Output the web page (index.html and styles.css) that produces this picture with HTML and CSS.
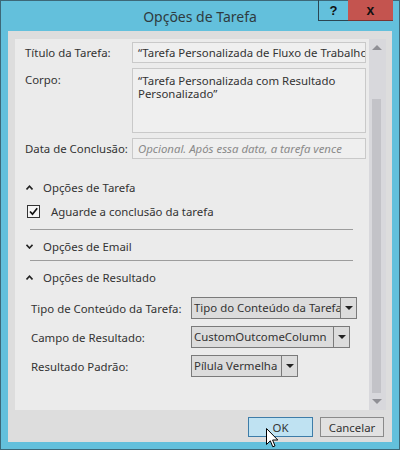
FILE: index.html
```html
<!DOCTYPE html>
<html lang="pt">
<head>
<meta charset="utf-8">
<link rel="stylesheet" href="styles.css">
</head>
<body>
<div class="window">
  <div class="titlebar">
    <div class="spacer"></div>
    <div class="title">Opções de Tarefa</div>
    <div class="caption-btns">
      <div class="cap help">?</div>
      <div class="cap close">x</div>
    </div>
  </div>
  <div class="client">
    <div class="panel">
      <div class="content">
        <div class="form">
          <div class="label">Título da Tarefa:</div>
          <div class="field">“Tarefa Personalizada de Fluxo de Trabalho”</div>
          <div class="label top">Corpo:</div>
          <div class="field area">“Tarefa Personalizada com Resultado Personalizado”</div>
          <div class="label">Data de Conclusão:</div>
          <div class="field placeholder">Opcional. Após essa data, a tarefa vence</div>
        </div>

        <div class="sec-head first">
          <svg class="chev" width="7" height="5" viewBox="0 0 7 5"><path d="M0.5 4.5 L3.5 1.2 L6.5 4.5" fill="none" stroke="#222" stroke-width="1.6"/></svg>
          <span>Opções de Tarefa</span>
        </div>
        <div class="check-row">
          <span class="checkbox"><svg width="11" height="11" viewBox="0 0 11 11"><path d="M2 5.5 L4.5 8.2 L9.2 2.2" fill="none" stroke="#111" stroke-width="1.7"/></svg></span>
          <span>Aguarde a conclusão da tarefa</span>
        </div>
        <div class="sep"></div>
        <div class="sec-head">
          <svg class="chev" width="7" height="5" viewBox="0 0 7 5"><path d="M0.5 0.8 L3.5 4 L6.5 0.8" fill="none" stroke="#222" stroke-width="1.6"/></svg>
          <span>Opções de Email</span>
        </div>
        <div class="sep second"></div>
        <div class="sec-head">
          <svg class="chev" width="7" height="5" viewBox="0 0 7 5"><path d="M0.5 4.5 L3.5 1.2 L6.5 4.5" fill="none" stroke="#222" stroke-width="1.6"/></svg>
          <span>Opções de Resultado</span>
        </div>

        <div class="drops">
          <div class="dlabel">Tipo de Conteúdo da Tarefa:</div>
          <div class="combo"><span class="ctext w1">Tipo do Conteúdo da Tarefa</span><span class="carrow"></span></div>
          <div class="dlabel">Campo de Resultado:</div>
          <div class="combo"><span class="ctext w2">CustomOutcomeColumn</span><span class="carrow"></span></div>
          <div class="dlabel">Resultado Padrão:</div>
          <div class="combo"><span class="ctext w3">Pílula Vermelha</span><span class="carrow"></span></div>
        </div>
      </div>
      <div class="scrollbar">
        <div class="sb-btn"><span class="tri up"></span></div>
        <div class="sb-track"><div class="sb-thumb"></div></div>
        <div class="sb-btn"><span class="tri down"></span></div>
      </div>
    </div>
    <div class="buttons">
      <div class="btn ok">OK</div>
      <div class="btn">Cancelar</div>
    </div>
  </div>
  <svg class="cursor" width="13" height="21" viewBox="0 0 13 21">
    <path d="M0.5 0.5 L0.5 16.5 L4.3 12.8 L6.8 18.8 L9 17.9 L6.6 12 L11.8 12 Z" fill="#fff" stroke="#000" stroke-width="1" stroke-linejoin="miter"/>
  </svg>
</div>
</body>
</html>
```

FILE: styles.css
```css
* { box-sizing: border-box; }
html, body { margin: 0; padding: 0; }
body {
  font-family: "Segoe UI", "Noto Sans", "Open Sans", sans-serif;
  font-size: 11.4px;
  color: #333;
}
.window {
  position: relative;
  width: 400px;
  height: 450px;
  background: #63c0dc;
  border: 1px solid #3d6878;
  display: flex;
  flex-direction: column;
}
.titlebar {
  height: 30px;
  display: grid;
  grid-template-columns: 1fr auto 1fr;
  align-items: center;
}
.title {
  font-size: 14px;
  color: #2f3b40;
  padding-top: 1px;
}
.caption-btns {
  justify-self: end;
  align-self: start;
  display: flex;
  margin-top: -1px;
  margin-right: 6px;
}
.cap {
  height: 21px;
  display: flex;
  align-items: center;
  justify-content: center;
  font-weight: bold;
  color: #111;
  font-size: 13px;
}
.help {
  width: 30px;
  border: 1px solid #2a4653;
  border-top: none;
  border-right: none;
  font-family: "Liberation Sans", sans-serif;
}
.close {
  width: 45px;
  background: #c4544f;
  border-bottom: 1px solid #7a3431;
  font-family: "Liberation Sans", sans-serif;
  font-size: 14px;
}
.client {
  flex: 1;
  margin: 0 7px 7px 7px;
  background: #dddddd;
  display: flex;
  flex-direction: column;
}
.panel {
  margin: 8px 6px 0 7px;
  height: 371px;
  background: #ebebeb;
  display: flex;
}
.content {
  flex: 1;
  padding: 3px 3px 0 10px;
  overflow: hidden;
}
.form {
  display: grid;
  grid-template-columns: 107px 234px;
  row-gap: 5px;
}
.label {
  display: flex;
  align-items: center;
  height: 21px;
  white-space: nowrap;
}
.label.top { align-items: flex-start; padding-top: 4px; }
.field {
  height: 21px;
  background: #efefef;
  border: 1px solid #c9c9c9;
  padding: 2px 5px 0 5px;
  white-space: nowrap;
  overflow: hidden;
  line-height: 16px;
}
.field.area {
  height: 65px;
  white-space: normal;
  line-height: 13px;
  padding-top: 5px;
}
.field.placeholder {
  font-style: italic;
  color: #8a8a8a;
}
.sec-head {
  height: 20px;
  display: flex;
  align-items: center;
  padding-left: 1px;
  gap: 10px;
  margin-top: 6px;
}
.sec-head.first { margin-top: 18px; }
.chev { flex: none; }
.check-row {
  height: 20px;
  display: flex;
  align-items: center;
  gap: 11px;
  padding-left: 2px;
  margin-top: 4px;
}
.checkbox {
  width: 13px;
  height: 13px;
  border: 1px solid #333;
  background: #f5f5f5;
  display: flex;
  align-items: center;
  justify-content: center;
}
.sep {
  height: 1px;
  background: #9c9c9c;
  margin: 8px 13px 0 5px;
}
.sep.second { margin-top: 4px; }
.drops {
  display: grid;
  grid-template-columns: 160px auto;
  justify-content: start;
  row-gap: 7px;
  margin-top: 10px;
  padding-left: 6px;
}
.dlabel {
  height: 22px;
  display: flex;
  align-items: center;
  white-space: nowrap;
}
.combo {
  height: 22px;
  display: flex;
  border: 1px solid #7a7a7a;
  background: #dcdcdc;
  justify-self: start;
}
.ctext {
  white-space: nowrap;
  overflow: hidden;
  padding-left: 2px;
  line-height: 20px;
  border-right: 1px solid #7a7a7a;
}
.ctext.w1 { width: 149px; }
.ctext.w2 { width: 142px; }
.ctext.w3 { width: 90px; }
.carrow {
  width: 15px;
  position: relative;
}
.carrow::after {
  content: "";
  position: absolute;
  left: 4px;
  top: 8px;
  border-left: 4px solid transparent;
  border-right: 4px solid transparent;
  border-top: 4px solid #222;
}
.scrollbar {
  width: 17px;
  background: #d8d8dc;
  display: flex;
  flex-direction: column;
}
.sb-btn {
  height: 17px;
  display: flex;
  align-items: center;
  justify-content: center;
  padding-right: 2px;
}
.tri { width: 0; height: 0; border-left: 5px solid transparent; border-right: 5px solid transparent; }
.tri.up { border-bottom: 5px solid #8f8f95; }
.tri.down { border-top: 5px solid #8f8f95; }
.sb-track {
  flex: 1;
  padding: 43px 5px 0 3px;
}
.sb-thumb {
  height: 100%;
  background: #c3c3c8;
}
.buttons {
  flex: 1;
  display: flex;
  justify-content: flex-end;
  align-items: flex-start;
  gap: 7px;
  padding: 7px 8px 0 0;
}
.btn {
  height: 20px;
  width: 64px;
  display: flex;
  align-items: center;
  justify-content: center;
  background: #e1e1e1;
  border: 1px solid #8a8a8a;
  color: #333;
}
.btn.ok {
  width: 65px;
  background: #bfe2f2;
  border-color: #3d7ca8;
}
.cursor {
  position: absolute;
  left: 265px;
  top: 427px;
}
```
